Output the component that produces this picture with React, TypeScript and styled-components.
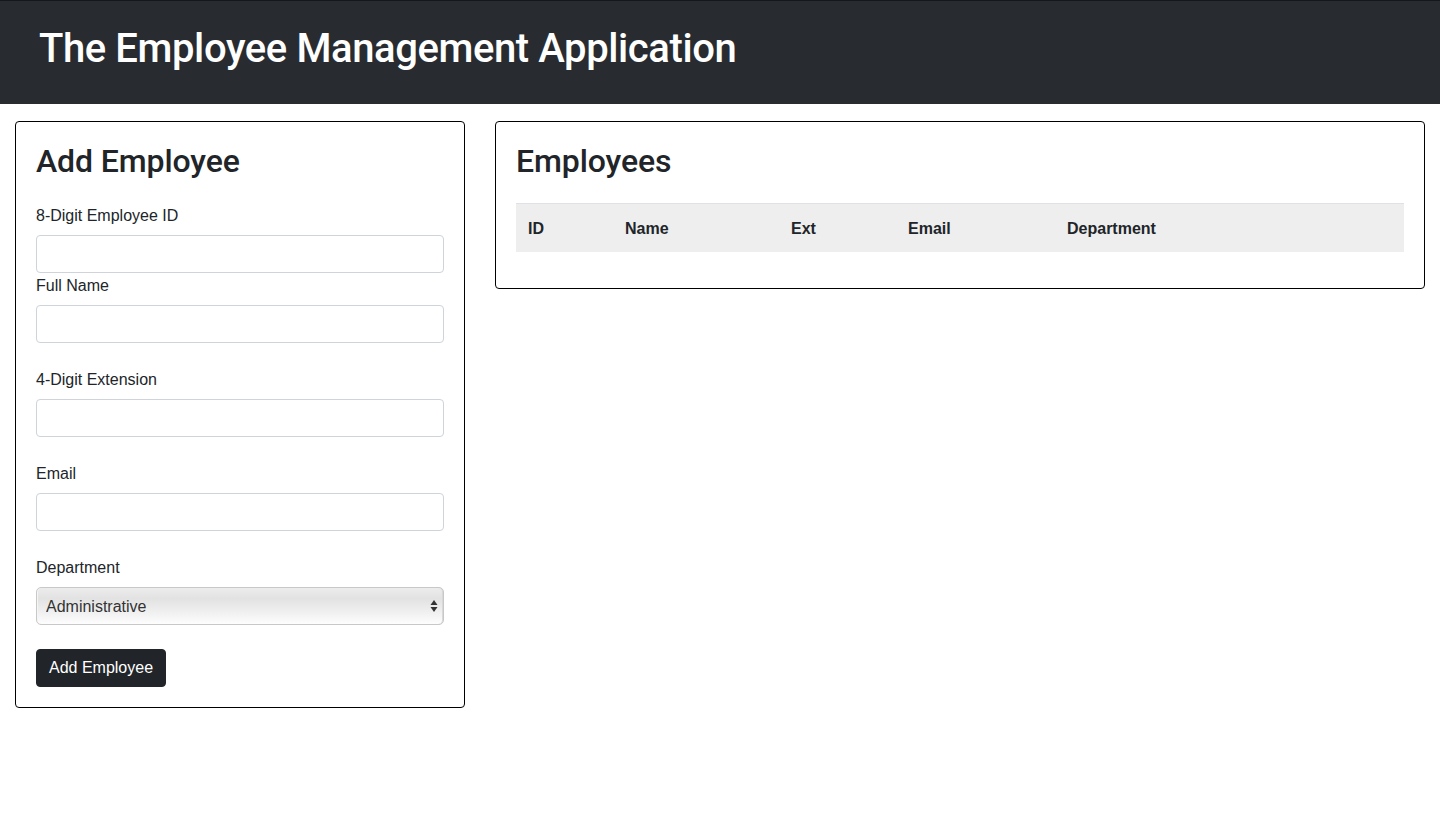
import React from "react";
import styled, { createGlobalStyle } from "styled-components";

const GlobalStyle = createGlobalStyle`
  * { box-sizing: border-box; }
  html, body { margin: 0; padding: 0; background: #fff; }
  body {
    font-family: "Liberation Sans", Arial, sans-serif;
    font-size: 16px;
    line-height: 1.5;
    color: #212529;
  }
`;

const Header = styled.header`
  background: #282c30;
  border-top: 1px solid #15181b;
  height: 104px;
  padding: 24px 39px 0;
`;

const Title = styled.h1`
  margin: 0;
  font-family: Roboto, "Liberation Sans", Arial, sans-serif;
  font-size: 40px;
  line-height: 48px;
  font-weight: 500;
  color: #fff;
  letter-spacing: -0.4px;
`;

const Main = styled.main`
  display: grid;
  grid-template-columns: 1fr 2fr;
  padding-top: 17px;
  align-items: start;
`;

const Col = styled.div`
  padding: 0 15px;
`;

const Card = styled.section`
  border: 1px solid #000;
  border-radius: 4px;
  padding: 20px;
`;

const CardTitle = styled.h2`
  margin: 0 0 22.6px;
  font-family: Roboto, "Liberation Sans", Arial, sans-serif;
  font-size: 32px;
  line-height: 38.4px;
  font-weight: 500;
  letter-spacing: -0.1px;
  color: #212529;
`;

const Form = styled.form`
  display: flex;
  flex-direction: column;
`;

const Group = styled.div<{ $gap: number }>`
  display: flex;
  flex-direction: column;
  margin-bottom: ${(p) => p.$gap}px;
`;

const Label = styled.label`
  display: block;
  margin-bottom: 7px;
  padding-top: 1px;
  font-size: 16px;
  line-height: 24px;
`;

const Input = styled.input`
  display: block;
  width: 100%;
  height: 38px;
  padding: 6px 12px;
  font: inherit;
  color: #495057;
  background: #fff;
  border: 1px solid #ced4da;
  border-radius: 4px;
  outline: none;
`;

const SelectWrap = styled.div`
  position: relative;
`;

const Select = styled.select`
  display: block;
  width: 100%;
  height: 38px;
  padding: 0 24px 0 9px;
  font-family: "Liberation Sans", Arial, sans-serif;
  font-size: 16px;
  color: #333;
  appearance: none;
  -webkit-appearance: none;
  border: 1px solid #c8c8c8;
  border-radius: 5px;
  background: linear-gradient(#ececec 0%, #e2e2e2 30%, #f3f3f3 75%, #fdfdfd 100%);
  box-shadow: inset 1px 0 0 #f5f5f5, inset -1px 0 0 #d8d8d8;
  outline: none;
`;

const Arrows = styled.svg`
  position: absolute;
  right: 6px;
  top: 12px;
  width: 8px;
  height: 14px;
  pointer-events: none;
`;

const Button = styled.button`
  align-self: flex-start;
  height: 38px;
  padding: 6px 12px;
  font-family: "Liberation Sans", Arial, sans-serif;
  font-size: 16px;
  line-height: 24px;
  color: #fff;
  background: #212529;
  border: 1px solid #212529;
  border-radius: 4px;
  cursor: pointer;
`;

const Table = styled.table`
  width: 100%;
  border-collapse: collapse;
  margin-bottom: 16px;
`;

const HeadRow = styled.tr`
  background: #eeeeee;
`;

const Th = styled.th<{ $w?: number }>`
  text-align: left;
  font-weight: 700;
  font-size: 16px;
  line-height: 24px;
  padding: 13px 12px 11px;
  border-top: 1px solid #dee2e6;
  width: ${(p) => (p.$w ? `${p.$w}px` : "auto")};
`;

const fields = [
  { label: "8-Digit Employee ID", gap: 0 },
  { label: "Full Name", gap: 24 },
  { label: "4-Digit Extension", gap: 24 },
  { label: "Email", gap: 24 },
];

export default function App() {
  return (
    <>
      <GlobalStyle />
      <Header>
        <Title>The Employee Management Application</Title>
      </Header>
      <Main>
        <Col>
          <Card>
            <CardTitle>Add Employee</CardTitle>
            <Form onSubmit={(e) => e.preventDefault()}>
              {fields.map((f) => (
                <Group key={f.label} $gap={f.gap}>
                  <Label>{f.label}</Label>
                  <Input type="text" />
                </Group>
              ))}
              <Group $gap={24}>
                <Label>Department</Label>
                <SelectWrap>
                  <Select defaultValue="Administrative">
                    <option>Administrative</option>
                    <option>Engineering</option>
                    <option>Executive</option>
                    <option>Finance</option>
                    <option>Marketing</option>
                    <option>Sales</option>
                  </Select>
                  <Arrows viewBox="0 0 8 14">
                    <path d="M4 1 L7.5 6 L0.5 6 Z" fill="#333" />
                    <path d="M4 13 L7.5 8 L0.5 8 Z" fill="#333" />
                  </Arrows>
                </SelectWrap>
              </Group>
              <Button type="submit">Add Employee</Button>
            </Form>
          </Card>
        </Col>
        <Col>
          <Card>
            <CardTitle>Employees</CardTitle>
            <Table>
              <thead>
                <HeadRow>
                  <Th $w={97}>ID</Th>
                  <Th $w={166}>Name</Th>
                  <Th $w={117}>Ext</Th>
                  <Th $w={159}>Email</Th>
                  <Th>Department</Th>
                </HeadRow>
              </thead>
              <tbody />
            </Table>
          </Card>
        </Col>
      </Main>
    </>
  );
}
